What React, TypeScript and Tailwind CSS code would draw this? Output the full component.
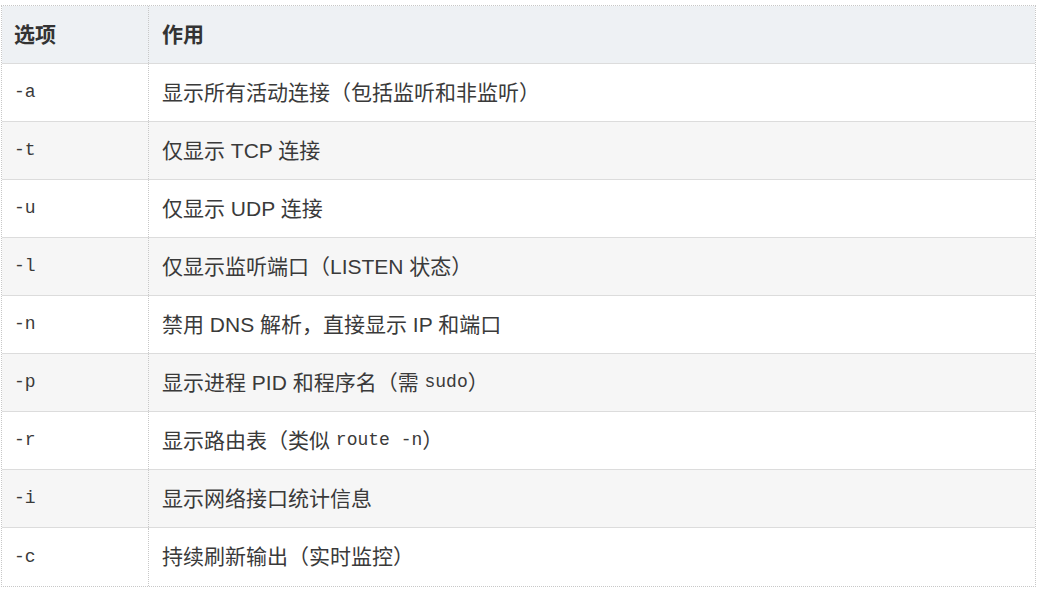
import React from "react";

const rows: { opt: string; desc: React.ReactNode }[] = [
  { opt: "-a", desc: "显示所有活动连接（包括监听和非监听）" },
  { opt: "-t", desc: "仅显示 TCP 连接" },
  { opt: "-u", desc: "仅显示 UDP 连接" },
  { opt: "-l", desc: "仅显示监听端口（LISTEN 状态）" },
  { opt: "-n", desc: "禁用 DNS 解析，直接显示 IP 和端口" },
  {
    opt: "-p",
    desc: (
      <>
        显示进程 PID 和程序名（需 <code className="font-['Liberation_Mono',monospace] text-[18px]">sudo</code>）
      </>
    ),
  },
  {
    opt: "-r",
    desc: (
      <>
        显示路由表（类似 <code className="font-['Liberation_Mono',monospace] text-[18px]">route -n</code>）
      </>
    ),
  },
  { opt: "-i", desc: "显示网络接口统计信息" },
  { opt: "-c", desc: "持续刷新输出（实时监控）" },
];

export default function App() {
  return (
    <div className="w-[1060px] h-[601px] bg-white pt-[5px] pl-[1px] font-['Liberation_Sans','Noto_Sans_CJK_SC',sans-serif] text-[#3a3a3a]">
      <div className="w-[1035px] border border-dotted border-[#c8c8c8]">
        <div className="flex h-[58px] bg-[#eef1f4] border-b border-[#dcdcdc] font-bold text-[21px] text-[#333]">
          <div className="w-[147px] pl-[12px] flex items-center border-r border-dotted border-[#c8c8c8]">选项</div>
          <div className="flex-1 pl-[13px] flex items-center">作用</div>
        </div>
        {rows.map((r, i) => (
          <div
            key={r.opt}
            className={
              "flex h-[58px] text-[21px] " +
              (i % 2 === 1 ? "bg-[#f6f6f6] " : "bg-white ") +
              (i < rows.length - 1 ? "border-b border-[#dcdcdc]" : "")
            }
          >
            <div className="w-[147px] pl-[12px] flex items-center border-r border-dotted border-[#c8c8c8] font-['Liberation_Mono',monospace] text-[18px]">
              {r.opt}
            </div>
            <div className="flex-1 pl-[13px] flex items-center whitespace-pre">{r.desc}</div>
          </div>
        ))}
      </div>
    </div>
  );
}
